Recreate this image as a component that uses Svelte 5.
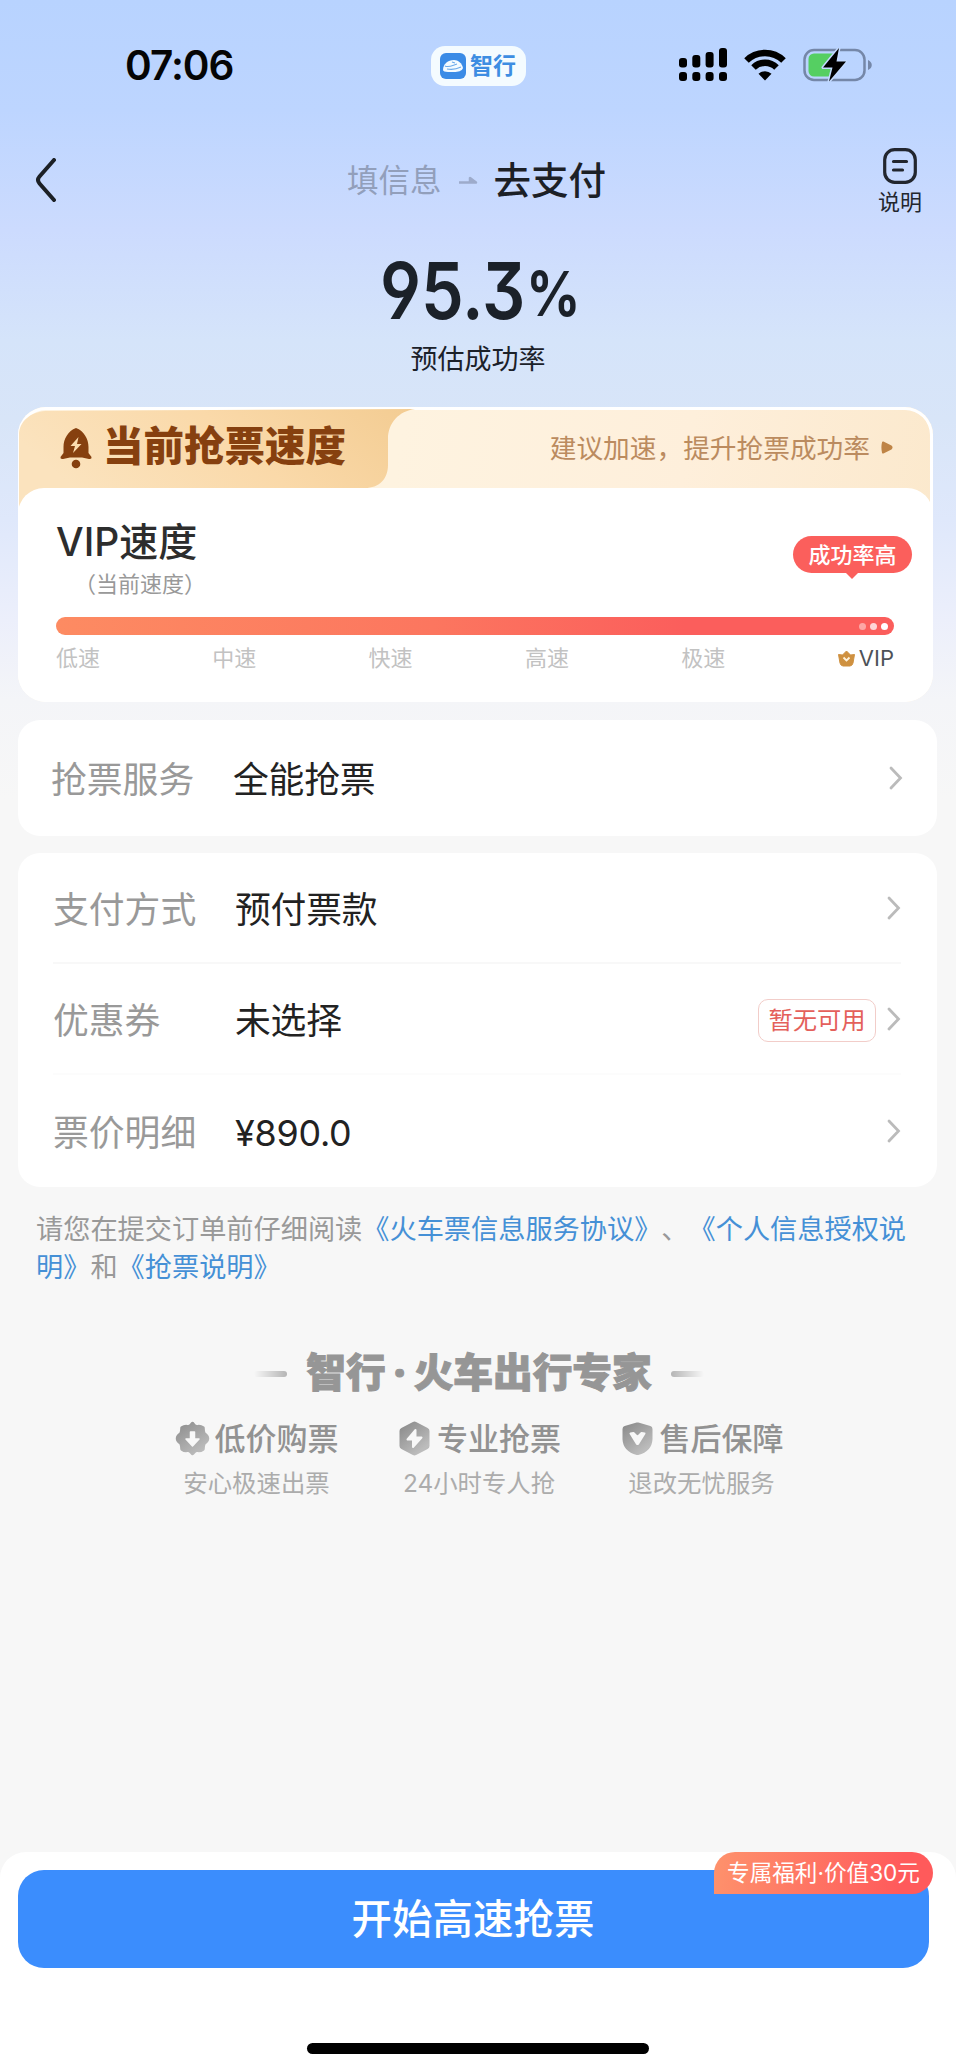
<script>
    const speeds = ["低速", "中速", "快速", "高速", "极速"];

    const service = { label: "抢票服务", value: "全能抢票" };

    const rows = [
        { label: "支付方式", value: "预付票款" },
        { label: "优惠券", value: "未选择", tag: "暂无可用" },
        { label: "票价明细", value: "¥890.0" },
    ];

    const features = [
        { icon: "price", title: "低价购票", desc: "安心极速出票" },
        { icon: "bolt", title: "专业抢票", desc: "24小时专人抢" },
        { icon: "shield", title: "售后保障", desc: "退改无忧服务" },
    ];
</script>

{#snippet chevron()}
    <svg class="chevron" width="14" height="24" viewBox="0 0 14 24">
        <path d="M2 2 L11.5 12 L2 22" />
    </svg>
{/snippet}

{#snippet row(item)}
    <div class="row">
        <span class="row-label">{item.label}</span>
        <span class="row-value">{item.value}</span>
        {#if item.tag}
            <span class="tag">{item.tag}</span>
        {/if}
        {@render chevron()}
    </div>
{/snippet}

<div class="page">
    <div class="status-bar">
        <div class="time">07:06</div>
        <div class="app-pill">
            <svg width="26" height="26" viewBox="0 0 26 26">
                <rect width="26" height="26" rx="6" fill="#3a8be6" />
                <path d="M3 17c0-6 5-10 11-10 4 0 8 3 9 8-1 3-5 4-9 4H8c-3 0-5-1-5-2z" fill="#f4fbff" />
                <path d="M5 13c4 2 8-1 12-2M7 16c5 1 10 0 14-2M12 9l3 1" fill="none" stroke="#6aa9ea" stroke-width="1.1" />
            </svg>
            <span>智行</span>
        </div>
        <div class="status-icons">
            <svg width="48" height="34" viewBox="0 0 48 34">
                <rect x="0" y="10" width="8" height="9.500" rx="3" />
                <rect x="13.300" y="7" width="8" height="12.500" rx="3" />
                <rect x="26.600" y="4" width="8" height="15.500" rx="3" />
                <rect x="40" y="0" width="8" height="19.500" rx="3" />
                <rect x="0" y="24" width="8" height="9" rx="3" />
                <rect x="13.300" y="24" width="8" height="9" rx="3" />
                <rect x="26.600" y="24" width="8" height="9" rx="3" />
                <rect x="40" y="24" width="8" height="9" rx="3" />
            </svg>
            <svg class="wifi" width="42" height="32" viewBox="0 0 42 32">
                <path d="M2.500 11.500A26.500 26.500 0 0 1 39.500 11.500" />
                <path d="M9.500 18.500A16.500 16.500 0 0 1 32.500 18.500" />
                <path class="solid" d="M21 31.500L14.500 24.800A9.500 9.500 0 0 1 27.500 24.800Z" />
            </svg>
            <svg class="battery" width="70" height="34" viewBox="0 0 70 34">
                <rect x="1.500" y="2" width="60" height="30" rx="9.500" fill="none" stroke="#7587a8" stroke-width="2.500" />
                <path d="M65 12c5 2 5 8 0 10z" fill="#7587a8" />
                <path d="M11 5.500H31V28.500H11a5.500 5.500 0 0 1-5.500-5.500V11A5.500 5.500 0 0 1 11 5.500z" fill="#55cf62" />
                <path d="M36 0L20 19.500H29.500L26 33.500L43 13.500H33.500Z" fill="#000" stroke="#c3daff" stroke-width="3" paint-order="stroke" stroke-linejoin="round" />
            </svg>
        </div>
    </div>

    <div class="nav">
        <svg class="back" width="22" height="44" viewBox="0 0 22 44">
            <path d="M19 2L4.500 18.500q-3 3.500 0 7L19 42" />
        </svg>
        <div class="steps">
            <span class="step-prev">填信息</span>
            <svg width="20" height="10" viewBox="0 0 20 10">
                <path d="M1 6.500H18L12 2V6" fill="#9dabcb" stroke="#9dabcb" stroke-width="2.500" stroke-linejoin="round" />
            </svg>
            <span class="step-now">去支付</span>
        </div>
        <div class="help">
            <svg width="34" height="36" viewBox="0 0 34 36">
                <rect x="1.700" y="1.700" width="30.600" height="32.600" rx="10" />
                <path d="M10.500 13.500H23.500M10.500 22H19.500" />
            </svg>
            <span>说明</span>
        </div>
    </div>

    <div class="rate">
        <div class="rate-number">95.3<span>%</span></div>
        <div class="rate-label">预估成功率</div>
    </div>

    <div class="speed-card">
        <div class="speed-head">
            <svg class="tab-shape" width="396" height="104" viewBox="0 0 396 104">
                <defs>
                    <linearGradient id="tab" x1="0" y1="0.300" x2="1" y2="0">
                        <stop offset="0" stop-color="#fbe3be" />
                        <stop offset="0.500" stop-color="#fad9a9" />
                        <stop offset="1" stop-color="#f3cc92" />
                    </linearGradient>
                </defs>
                <path d="M0 104V26C0 12 12 3 26 2L396 0C380 2 369 14 369 30V56C369 70 360 79 346 79H40V104Z" fill="url(#tab)" />
            </svg>
            <div class="speed-title">
                <svg width="32" height="42" viewBox="0 0 32 42">
                    <path d="M16 1C8 4 3.500 12 3.500 20V26L0.500 30Q0 32.500 3 32L10 30.500H22L29 32Q32 32.500 31.500 30L28.500 26V20C28.500 12 24 4 16 1Z" fill="#86400f" />
                    <circle cx="16" cy="37" r="4.300" fill="#86400f" />
                    <path d="M18.500 10L10.500 19H15L13 26L21.500 17H17Z" fill="#fbdcae" />
                </svg>
                <span>当前抢票速度</span>
            </div>
            <div class="speed-tip">
                <span>建议加速，提升抢票成功率</span>
                <svg width="12" height="13" viewBox="0 0 12 13">
                    <path d="M2 1.500L10 5.500Q11 6.500 10 7.500L2 11.500Q0.800 6.500 2 1.500Z" fill="#bf8446" stroke="#bf8446" stroke-width="2" stroke-linejoin="round" />
                </svg>
            </div>
        </div>
        <div class="speed-body">
            <div class="speed-name">VIP速度</div>
            <div class="speed-sub">（当前速度）</div>
            <div class="bubble">成功率高</div>
            <div class="track">
                <i></i><i></i><i></i>
            </div>
            <div class="scale">
                {#each speeds as speed}
                    <span class="scale-item">{speed}</span>
                {/each}
                <span class="scale-vip">
                    <svg width="17" height="17" viewBox="0 0 17 17">
                        <path d="M0.500 4.500L4.500 5L8.500 1L12.500 5L16.500 4.500L15 13Q14.500 15.500 12 16H5Q2.500 15.500 2 13Z" fill="#cf9140" stroke="#cf9140" stroke-linejoin="round" />
                        <path d="M5.500 7.500L8.500 10.500L11.500 7.500" fill="none" stroke="#fff3dc" stroke-width="1.800" />
                    </svg>
                    VIP
                </span>
            </div>
        </div>
    </div>

    <div class="card service">
        {@render row(service)}
    </div>

    <div class="card payment">
        {#each rows as item}
            {@render row(item)}
        {/each}
    </div>

    <p class="agreement">
        请您在提交订单前仔细阅读<a>《火车票信息服务协议》</a>、<a>《个人信息授权说明》</a>和<a>《抢票说明》</a>
    </p>

    <div class="brand">
        <i class="dash"></i>
        <span>智行<b>·</b>火车出行专家</span>
        <i class="dash right"></i>
    </div>

    <div class="features">
        {#each features as feature}
            <div class="feature">
                <div class="feature-title">
                    <svg width="35" height="35" viewBox="0 0 35 35">
                        <defs>
                            <linearGradient id="g-{feature.icon}" x1="0" y1="0" x2="0.700" y2="1">
                                <stop offset="0" stop-color="#8e8e8e" />
                                <stop offset="1" stop-color="#bcbcbc" />
                            </linearGradient>
                        </defs>
                        {#if feature.icon === "price"}
                            <path
                                d="M17.500 2.500Q20 6 22 5.800Q25 4.800 28 7Q28 11 29.200 13Q32.500 15 32.500 17.500Q32.500 20 29.200 22Q28 24 28 28Q25 30.200 22 29.200Q20 29 17.500 32.500Q15 29 13 29.200Q10 30.200 7 28Q7 24 5.800 22Q2.500 20 2.500 17.500Q2.500 15 5.800 13Q7 11 7 7Q10 4.800 13 5.800Q15 6 17.500 2.500Z"
                                fill="url(#g-price)"
                                stroke="url(#g-price)"
                                stroke-width="3.500"
                                stroke-linejoin="round"
                            />
                            <path d="M15.500 11h4v7h4.500L17.500 25L11 18H15.500z" fill="#f8f8f8" stroke="#f8f8f8" stroke-width="1.500" stroke-linejoin="round" />
                        {:else if feature.icon === "bolt"}
                            <path
                                d="M17.500 4L29 10V25L17.500 31L6 25V10Z"
                                fill="url(#g-bolt)"
                                stroke="url(#g-bolt)"
                                stroke-width="7"
                                stroke-linejoin="round"
                            />
                            <path d="M18.500 9L10.500 18.500H16V26L24.500 16.500H18.500Z" fill="#f8f8f8" stroke="#f8f8f8" stroke-width="2" stroke-linejoin="round" />
                        {:else}
                            <path
                                d="M17.500 4.500L29.500 8V18Q29 28 17.500 31Q6 28 5.500 18V8Z"
                                fill="url(#g-shield)"
                                stroke="url(#g-shield)"
                                stroke-width="6"
                                stroke-linejoin="round"
                            />
                            <path d="M10.500 12.500L13.500 12L17.500 16L21.500 12L24.500 12.500L18 23H17Z" fill="#f8f8f8" stroke="#f8f8f8" stroke-width="2" stroke-linejoin="round" />
                        {/if}
                    </svg>
                    <span>{feature.title}</span>
                </div>
                <div class="feature-desc">{feature.desc}</div>
            </div>
        {/each}
    </div>

    <div class="bottom-bar">
        <button class="submit">
            开始高速抢票
            <span class="gift">专属福利·价值30元</span>
        </button>
        <div class="home-indicator"></div>
    </div>
</div>

<style>
    :global(body) {
        background: #f7f7f7;
    }

    .page {
        display: flex;
        flex-direction: column;
        width: 956px;
        height: 2072px;
        overflow: hidden;
        box-sizing: border-box;
        font-family: Inter, "Noto Sans CJK SC", sans-serif;
        color: #222;
        text-spacing-trim: space-all;
        background: linear-gradient(
            180deg,
            #b8d3ff 0,
            #bdd5ff 110px,
            #ccdbfe 230px,
            #d5e4fa 340px,
            #d8e5f8 420px,
            #dfe8fb 520px,
            #eceffb 620px,
            #f4f5f8 700px,
            #f7f7f7 800px
        );
    }

    .status-bar {
        display: flex;
        align-items: center;
        height: 132px;
        padding: 0 83px 0 125px;
        box-sizing: border-box;
    }

    .time {
        width: 306px;
        font-size: 40.500px;
        font-weight: 600;
        color: #050505;
        line-height: 1;
        letter-spacing: -1px;
    }

    .app-pill {
        display: flex;
        align-items: center;
        gap: 4px;
        width: 95px;
        height: 40px;
        padding-left: 9px;
        border-radius: 14px;
        background: #f4fbff;
        box-sizing: border-box;
        color: #3d8de2;
        font-size: 23px;
        font-weight: 700;
        line-height: 1;
    }

    .status-icons {
        display: flex;
        align-items: center;
        margin: -3px 0 0 auto;
    }

    .wifi {
        margin: 0 17px 0 17px;
    }

    .wifi path {
        fill: none;
        stroke: #000;
        stroke-width: 6.500;
    }

    .wifi .solid {
        fill: #000;
        stroke: none;
    }

    .nav {
        display: flex;
        align-items: center;
        height: 96px;
        padding: 0 34px 0 35px;
    }

    .back {
        fill: none;
        stroke: #1c2026;
        stroke-width: 4;
        stroke-linecap: round;
    }

    .steps {
        display: flex;
        flex: 1;
        align-items: center;
        gap: 16px;
        padding: 2px 0 0 290px;
        line-height: 1;
    }

    .step-prev {
        font-size: 31.500px;
        color: #929fbb;
    }

    .step-now {
        font-size: 37.500px;
        font-weight: 500;
        color: #1c2026;
    }

    .help {
        display: flex;
        flex-direction: column;
        align-items: center;
        gap: 7px;
        padding-top: 1px;
        font-size: 22px;
        line-height: 1;
        color: #22262e;
    }

    .help svg {
        fill: none;
        stroke: #22262e;
        stroke-width: 3.200;
        stroke-linecap: round;
    }

    .rate {
        height: 179px;
        padding-top: 22px;
        box-sizing: border-box;
        text-align: center;
        color: #1b2129;
    }

    .rate-number {
        font-size: 79px;
        font-weight: 600;
        line-height: 80px;
        font-feature-settings: "ss01", "cv09";
        transform: scaleX(0.86);
    }

    .rate-number span {
        position: relative;
        top: -3px;
        margin-left: 1px;
        font-size: 62px;
        font-weight: 700;
        letter-spacing: -5px;
    }

    .rate-label {
        margin-top: 9px;
        font-size: 27px;
        line-height: 27px;
    }

    .speed-card {
        width: 915px;
        height: 295px;
        margin-left: 18px;
        border-radius: 28px;
        box-sizing: border-box;
        overflow: hidden;
        background: linear-gradient(100deg, #fef3e0 40%, #feefdb 70%, #fbe8cb 100%);
        box-shadow: inset 0 0 0 3px #fff;
        flex-shrink: 0;
    }

    .speed-head {
        position: relative;
        display: flex;
        align-items: center;
        justify-content: space-between;
        height: 81px;
        padding: 0 40px 0 42px;
    }

    .tab-shape {
        position: absolute;
        left: 1px;
        top: 2px;
    }

    .speed-title {
        position: relative;
        display: flex;
        align-items: center;
        gap: 11px;
        font-size: 40.500px;
        font-weight: 900;
        line-height: 1;
        color: #86400f;
    }

    .speed-tip {
        display: flex;
        align-items: center;
        gap: 11px;
        padding-top: 1px;
        font-size: 26.700px;
        line-height: 1;
        color: #bb8b5f;
    }

    .speed-body {
        position: relative;
        height: 214px;
        padding: 32px 39px 0 38px;
        border-radius: 26px 26px 0 0;
        box-sizing: border-box;
        background: #fff;
    }

    .speed-name {
        font-size: 39px;
        font-weight: 500;
        line-height: 43px;
        color: #2d2d2d;
    }

    .speed-sub {
        margin: 9px 0 0 18px;
        font-size: 22px;
        line-height: 24px;
        color: #999;
    }

    .bubble {
        position: absolute;
        right: 21px;
        top: 48px;
        width: 119px;
        height: 37px;
        border-radius: 19px;
        background: #fb5f5c;
        color: #fff;
        font-size: 22px;
        font-weight: 500;
        line-height: 38px;
        text-align: center;
    }

    .bubble::after {
        content: "";
        position: absolute;
        left: 52px;
        bottom: -6px;
        border: 7px solid transparent;
        border-top-color: #fb5f5c;
        border-bottom: 0;
    }

    .track {
        display: flex;
        align-items: center;
        justify-content: flex-end;
        gap: 4px;
        height: 18px;
        margin-top: 21px;
        padding-right: 6px;
        border-radius: 9px;
        background: linear-gradient(90deg, #fd8b62, #fc765f 45%, #fb5e5c 75%);
    }

    .track i {
        width: 7px;
        height: 7px;
        border-radius: 50%;
        background: #fff;
    }

    .track i:nth-child(1) {
        opacity: 0.45;
    }

    .track i:nth-child(2) {
        opacity: 0.75;
    }

    .scale {
        display: flex;
        padding-top: 12px;
        font-size: 22px;
        line-height: 22px;
        color: #c2c2c2;
    }

    .scale-item {
        width: 156.300px;
    }

    .scale-vip {
        display: flex;
        flex: 1;
        align-items: center;
        justify-content: flex-end;
        gap: 4px;
        color: #4d5258;
    }

    .card {
        width: 919px;
        margin-left: 18px;
        border-radius: 22px;
        box-sizing: border-box;
        background: #fff;
        flex-shrink: 0;
    }

    .service {
        height: 116px;
        margin-top: 18px;
        padding: 2px 34px 0 33px;
    }

    .payment {
        height: 334px;
        margin-top: 17px;
        padding: 0 36px 0 35px;
    }

    .row {
        display: flex;
        align-items: center;
        height: 111px;
        font-size: 35.800px;
        line-height: 1;
    }

    .payment .row:not(:last-child) {
        border-bottom: 2px solid #f8f8f8;
        box-sizing: border-box;
    }

    .payment .row:nth-child(2) {
        border-bottom-color: #fcfcfc;
    }

    .row-label,
    .row-value {
        padding-top: 6px;
    }

    .row-label {
        width: 182px;
        color: #999;
    }

    .row-value {
        flex: 1;
        color: #222;
        letter-spacing: -0.200px;
    }

    .chevron {
        fill: none;
        stroke: #bbb;
        stroke-width: 2.800;
        stroke-linecap: round;
    }

    .tag {
        width: 118px;
        height: 43px;
        margin: 4px 11px 0 0;
        border: 1.500px solid #f2cdc9;
        border-radius: 10px;
        box-sizing: border-box;
        color: #e4605b;
        font-size: 24.300px;
        line-height: 40px;
        text-align: center;
    }

    .agreement {
        width: 890px;
        margin: 24px 0 0 36px;
        font-size: 27.200px;
        line-height: 38px;
        color: #999;
    }

    .agreement a {
        color: #4590d6;
    }

    .brand {
        display: flex;
        align-items: center;
        justify-content: center;
        gap: 19px;
        height: 44px;
        margin-top: 65px;
        padding-left: 2px;
        font-size: 39.700px;
        font-weight: 900;
        line-height: 1;
        color: #969696;
    }

    .brand span {
        -webkit-text-stroke: 1px #969696;
    }

    .brand b {
        display: inline-block;
        width: 28px;
        text-align: center;
    }

    .dash {
        width: 33px;
        height: 6px;
        border-radius: 3px;
        background: linear-gradient(90deg, #f7f7f7, #b5b5b5);
    }

    .dash.right {
        transform: scaleX(-1);
    }

    .features {
        display: flex;
        justify-content: center;
        margin-top: 22px;
        padding-left: 2px;
    }

    .feature {
        width: 222.500px;
        text-align: center;
    }

    .feature-title {
        display: flex;
        align-items: center;
        justify-content: center;
        gap: 5px;
        height: 40px;
        font-size: 31px;
        font-weight: 500;
        line-height: 1;
        color: #929292;
    }

    .feature-desc {
        margin-top: 12px;
        font-size: 24.400px;
        line-height: 26px;
        color: #acacac;
    }

    .bottom-bar {
        display: flex;
        flex-direction: column;
        height: 220px;
        margin-top: auto;
        padding: 18px 27px 18px 18px;
        border-radius: 26px 26px 0 0;
        box-sizing: border-box;
        background: #fff;
    }

    .submit {
        position: relative;
        height: 98px;
        padding: 0 1px 6px 0;
        border: none;
        border-radius: 26px;
        background: #3b8dfd;
        color: #fff;
        font-family: inherit;
        font-size: 40.500px;
        font-weight: 500;
    }

    .gift {
        position: absolute;
        right: -4px;
        top: -18px;
        width: 219px;
        height: 42px;
        border-radius: 22px 22px 22px 0;
        background: linear-gradient(100deg, #fe926c, #ff5a5b 85%);
        font-size: 22.600px;
        font-weight: 400;
        line-height: 42px;
        text-align: center;
    }

    .home-indicator {
        width: 342px;
        height: 11px;
        margin: auto auto 0 289px;
        border-radius: 6px;
        background: #000;
    }
</style>
